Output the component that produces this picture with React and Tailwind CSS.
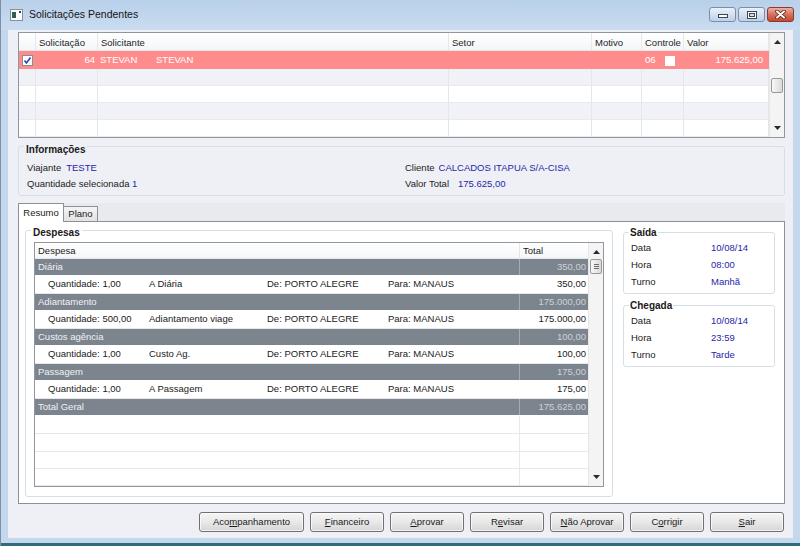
import React from "react";

const font = "font-['Liberation_Sans',Arial,sans-serif]";

const expenses = [
  { group: "Diária", total: "350,00", qty: "Quantidade: 1,00", desc: "A Diária", amount: "350,00" },
  { group: "Adiantamento", total: "175.000,00", qty: "Quantidade: 500,00", desc: "Adiantamento viage", amount: "175.000,00" },
  { group: "Custos agência", total: "100,00", qty: "Quantidade: 1,00", desc: "Custo Ag.", amount: "100,00" },
  { group: "Passagem", total: "175,00", qty: "Quantidade: 1,00", desc: "A Passagem", amount: "175,00" },
];

const gridCols = ["w-[17px]", "w-[62px]", "w-[351px]", "w-[143px]", "w-[50px]", "w-[42px]", "w-[85px]"];
const gridHead = ["", "Solicitação", "Solicitante", "Setor", "Motivo", "Controle", "Valor"];

function UpArrow() {
  return (
    <svg width="7" height="4" viewBox="0 0 7 4">
      <path d="M0 4L3.5 0L7 4Z" fill="#2b2b2b" />
    </svg>
  );
}

function DownArrow() {
  return (
    <svg width="7" height="4" viewBox="0 0 7 4">
      <path d="M0 0L3.5 4L7 0Z" fill="#2b2b2b" />
    </svg>
  );
}

function Scrollbar({ thumb, grip }) {
  return (
    <div className="relative flex w-[15px] flex-col items-center justify-between border-l border-[#e6e6e6] bg-[#f4f4f4] py-[7px]">
      <UpArrow />
      <DownArrow />
      <div className={`absolute left-[1px] flex h-[15px] w-[12px] flex-col items-center justify-center gap-[1px] rounded-[2px] border border-[#989898] bg-gradient-to-r from-[#f8f8f8] to-[#dadada] ${thumb}`}>
        {grip && (
          <>
            <span className="h-px w-[5px] bg-[#6e6e6e]" />
            <span className="h-px w-[5px] bg-[#6e6e6e]" />
            <span className="h-px w-[5px] bg-[#6e6e6e]" />
          </>
        )}
      </div>
    </div>
  );
}

function CapBtn({ red, w, children }) {
  return (
    <div
      className={`flex h-[15px] ${w} items-center justify-center rounded-[3px] border ${
        red
          ? "border-[#8a3b2e] bg-gradient-to-b from-[#eab0a2] via-[#d7705b] to-[#c4472f]"
          : "border-[#7b8ea7] bg-gradient-to-b from-[#eaf1f9] via-[#d4e1f1] to-[#bfd0e6]"
      }`}
    >
      {children}
    </div>
  );
}

function TitleBar() {
  return (
    <div className="flex h-[30px] bg-gradient-to-b from-[#b9d0ea] to-[#c9dcf0]">
      <div className="flex items-center pl-[9px]">
        <svg width="13" height="12" viewBox="0 0 13 12">
          <rect x="0.5" y="0.5" width="12" height="11" fill="#fdfdfd" stroke="#8a9099" />
          <rect x="2" y="3" width="4" height="6" fill="#2d5e58" />
          <rect x="9" y="2" width="2" height="2" fill="#3e4450" />
        </svg>
        <span className="ml-[6px] text-[10.5px] text-[#141414]">Solicitações Pendentes</span>
      </div>
      <div className="ml-auto mr-[6px] mt-[7px] flex gap-[2px]">
        <CapBtn w="w-[27px]">
          <svg width="10" height="8" viewBox="0 0 10 8">
            <rect x="0.5" y="3.5" width="9" height="3" fill="#fff" stroke="#3a4555" />
          </svg>
        </CapBtn>
        <CapBtn w="w-[27px]">
          <svg width="10" height="8" viewBox="0 0 10 8">
            <rect x="0.5" y="0.5" width="9" height="7" fill="#fff" stroke="#3a4555" />
            <rect x="2.5" y="2.5" width="5" height="3" fill="#d0ddee" stroke="#3a4555" />
          </svg>
        </CapBtn>
        <CapBtn red w="w-[27px]">
          <svg width="11" height="9" viewBox="0 0 11 9">
            <path d="M2 1.5L9 7.5M9 1.5L2 7.5" stroke="#5b1f15" strokeWidth="3.6" strokeLinecap="round" />
            <path d="M2 1.5L9 7.5M9 1.5L2 7.5" stroke="#fff" strokeWidth="2" strokeLinecap="round" />
          </svg>
        </CapBtn>
      </div>
    </div>
  );
}

function TopGrid() {
  return (
    <div className="mt-[2px] flex h-[106px] w-[767px] overflow-hidden border border-[#9097a0] bg-white">
      <div className="flex flex-1 flex-col">
        <div className="flex h-[18px] shrink-0 border-b border-[#e4e6ea] bg-gradient-to-b from-white to-[#f5f6f8]">
          {gridHead.map((h, i) => (
            <div key={i} className={`${gridCols[i]} flex items-center border-r border-[#e6e8ec] pl-[3px] pt-[3px] text-[9.5px] text-[#1e1e1e]`}>
              {h}
            </div>
          ))}
        </div>
        <div className="flex h-[18px] shrink-0 bg-[#ff8c8c] text-[9.5px] text-white">
          <div className={`${gridCols[0]} flex items-center justify-center`}>
            <div className="flex h-[11px] w-[11px] items-center justify-center border border-[#8e8e8e] bg-white">
              <svg width="9" height="9" viewBox="0 0 9 9">
                <path d="M1.5 4.5L3.5 7L7.5 1.5" fill="none" stroke="#2a44b8" strokeWidth="1.6" />
              </svg>
            </div>
          </div>
          <div className={`${gridCols[1]} flex items-center justify-end pr-[3px] pt-[1px]`}>64</div>
          <div className={`${gridCols[2]} flex items-center pl-[2px] pt-[1px]`}>
            <span className="w-[56px]">STEVAN</span>
            <span>STEVAN</span>
          </div>
          <div className={gridCols[3]} />
          <div className={gridCols[4]} />
          <div className={`${gridCols[5]} flex items-center pl-[3px] pt-[1px]`}>
            <span className="w-[20px]">06</span>
            <span className="h-[10px] w-[10px] bg-white" />
          </div>
          <div className={`${gridCols[6]} flex items-center justify-end pr-[6px] pt-[1px]`}>175.625,00</div>
        </div>
        {[0, 1, 2, 3].map((r) => (
          <div key={r} className={`flex h-[17px] shrink-0 border-b border-[#e8eaee] ${r % 2 === 0 ? "bg-[#f1f2f7]" : "bg-white"}`}>
            {gridCols.map((c, i) => (
              <div key={i} className={`${c} border-r border-[#e4e6ea]`} />
            ))}
          </div>
        ))}
      </div>
      <Scrollbar thumb="top-[45px]" />
    </div>
  );
}

function Info() {
  return (
    <div className="relative mt-[8px] h-[50px] w-[767px] rounded-[3px] border border-[#d6dfe6] text-[9.5px] leading-[16px]">
      <span className="absolute -top-[4px] left-[5px] bg-[#eff0f5] px-[2px] text-[10px] font-bold leading-[14px] text-[#1a1a1a]">Informações</span>
      <div className="flex pl-[8px] pt-[13px]">
        <div className="w-[378px]">
          <div>
            Viajante<span className="ml-[5px] text-[#2626aa]">TESTE</span>
          </div>
          <div>
            Quantidade selecionada <span className="text-[#2626aa]">1</span>
          </div>
        </div>
        <div>
          <div>
            Cliente<span className="ml-[4px] text-[#2626aa]">CALCADOS ITAPUA S/A-CISA</span>
          </div>
          <div>
            Valor Total<span className="ml-[9px] text-[#2626aa]">175.625,00</span>
          </div>
        </div>
      </div>
    </div>
  );
}

function GroupRow({ label, total }) {
  return (
    <div className="flex h-[17px] border-b border-white bg-[#7c848e] text-[9.5px]">
      <div className="flex flex-1 items-center pl-[3px] text-[#f0f2f5]">{label}</div>
      <div className="flex w-[69px] items-center justify-end border-l border-[#a4aab2] pr-[2px] text-[#cdd2d9]">{total}</div>
    </div>
  );
}

function ExpenseTable() {
  return (
    <div className="flex h-[245px] w-[570px] overflow-hidden border border-[#9097a0] bg-white">
      <div className="flex flex-1 flex-col">
        <div className="flex h-[16px] shrink-0 border-b border-[#e4e6ea] bg-gradient-to-b from-white to-[#f5f6f8] text-[9.5px]">
          <div className="flex flex-1 items-center pl-[3px] pt-[1px]">Despesa</div>
          <div className="flex w-[69px] items-center border-l border-[#e4e6ea] pl-[3px] pt-[1px]">Total</div>
        </div>
        {expenses.map((e) => (
          <React.Fragment key={e.group}>
            <GroupRow label={e.group} total={e.total} />
            <div className="flex h-[18px] shrink-0 border-b border-[#e6e8ec] text-[9.5px] text-[#1a1a1a]">
              <div className="flex flex-1 items-center pl-[13px]">
                <span className="w-[101px]">{e.qty}</span>
                <span className="w-[118px] whitespace-nowrap">{e.desc}</span>
                <span className="w-[121px]">De: PORTO ALEGRE</span>
                <span>Para: MANAUS</span>
              </div>
              <div className="flex w-[69px] items-center justify-end pr-[2px]">{e.amount}</div>
            </div>
          </React.Fragment>
        ))}
        <GroupRow label="Total Geral" total="175.625,00" />
        {["h-[18px]", "h-[18px]", "h-[17px]", "h-[17px]"].map((h, i) => (
          <div key={i} className={`flex ${h} shrink-0 border-b border-[#e6e8ec]`}>
            <div className="flex-1" />
            <div className="w-[69px] border-l border-[#e6e8ec]" />
          </div>
        ))}
      </div>
      <Scrollbar thumb="top-[16px]" grip />
    </div>
  );
}

function SideGroup({ title, rows, className = "" }) {
  return (
    <div className={`relative h-[62px] w-[152px] rounded-[3px] border border-[#d6dfe6] pl-[7px] pt-[6px] text-[9.5px] leading-[17px] ${className}`}>
      <span className="absolute -top-[7px] left-[5px] bg-white px-[1px] text-[10px] font-bold leading-[14px] text-[#1a1a1a]">{title}</span>
      {rows.map(([k, v]) => (
        <div key={k} className="flex">
          <span className="w-[80px]">{k}</span>
          <span className="text-[#2626aa]">{v}</span>
        </div>
      ))}
    </div>
  );
}

function Tabs() {
  return (
    <>
      <div className="mt-[7px] flex h-[18px] w-[767px] items-end bg-[#e9eaee] text-[9.5px]">
        <div className="relative z-10 -mb-px flex h-[19px] w-[46px] items-center justify-center border border-b-0 border-[#8d9097] bg-white pt-[1px]">
          Resumo
        </div>
        <div className="flex h-[15px] w-[34px] items-center justify-center border border-b-0 border-l-0 border-[#8d9097] bg-gradient-to-b from-[#f4f4f4] to-[#e2e2e2] pt-[1px]">
          Plano
        </div>
      </div>
      <div className="flex h-[283px] w-[767px] border border-[#8d9097] bg-white pl-[6px] pt-[8px]">
        <div className="relative h-[267px] w-[588px] rounded-[3px] border border-[#d6dfe6] pl-[8px] pt-[11px]">
          <span className="absolute -top-[5px] left-[5px] bg-white px-[2px] text-[10px] font-bold leading-[14px] text-[#1a1a1a]">Despesas</span>
          <ExpenseTable />
        </div>
        <div className="ml-[10px] flex flex-col pt-[2px]">
          <SideGroup
            title="Saída"
            rows={[
              ["Data", "10/08/14"],
              ["Hora", "08:00"],
              ["Turno", "Manhã"],
            ]}
          />
          <SideGroup
            className="mt-[11px]"
            title="Chegada"
            rows={[
              ["Data", "10/08/14"],
              ["Hora", "23:59"],
              ["Turno", "Tarde"],
            ]}
          />
        </div>
      </div>
    </>
  );
}

function Btn({ w = "w-[74px]", children }) {
  return (
    <div className={`flex h-[20px] ${w} items-center justify-center rounded-[3px] border border-[#707070] bg-gradient-to-b from-[#f5f5f5] via-[#e9e9e9] to-[#d5d5d5] text-[9.5px] text-[#1a1a1a] shadow-[inset_0_0_0_1px_rgba(255,255,255,0.7)]`}>
      {children}
    </div>
  );
}

function Buttons() {
  return (
    <div className="mt-[8px] flex justify-end gap-[6px] pr-[1px]">
      <Btn w="w-[105px]">
        Aco<u>m</u>panhamento
      </Btn>
      <Btn>
        <u>F</u>inanceiro
      </Btn>
      <Btn>
        <u>A</u>provar
      </Btn>
      <Btn>
        R<u>e</u>visar
      </Btn>
      <Btn>
        <u>N</u>ão Aprovar
      </Btn>
      <Btn>
        C<u>o</u>rrigir
      </Btn>
      <Btn>
        <u>S</u>air
      </Btn>
    </div>
  );
}

export default function App() {
  return (
    <div className={`${font} flex h-[546px] w-[800px] flex-col overflow-hidden border-l border-[#7f90a6] bg-[#c3d7ed] text-[#1b1b1b]`}>
      <TitleBar />
      <div className="ml-[7px] flex h-[508px] w-[785px] shrink-0 flex-col bg-[#eff0f5] pl-[10px] pr-[8px]">
        <TopGrid />
        <Info />
        <Tabs />
        <Buttons />
      </div>
      <div className="mt-auto h-[3px] bg-[#2f6b7a]" />
    </div>
  );
}
